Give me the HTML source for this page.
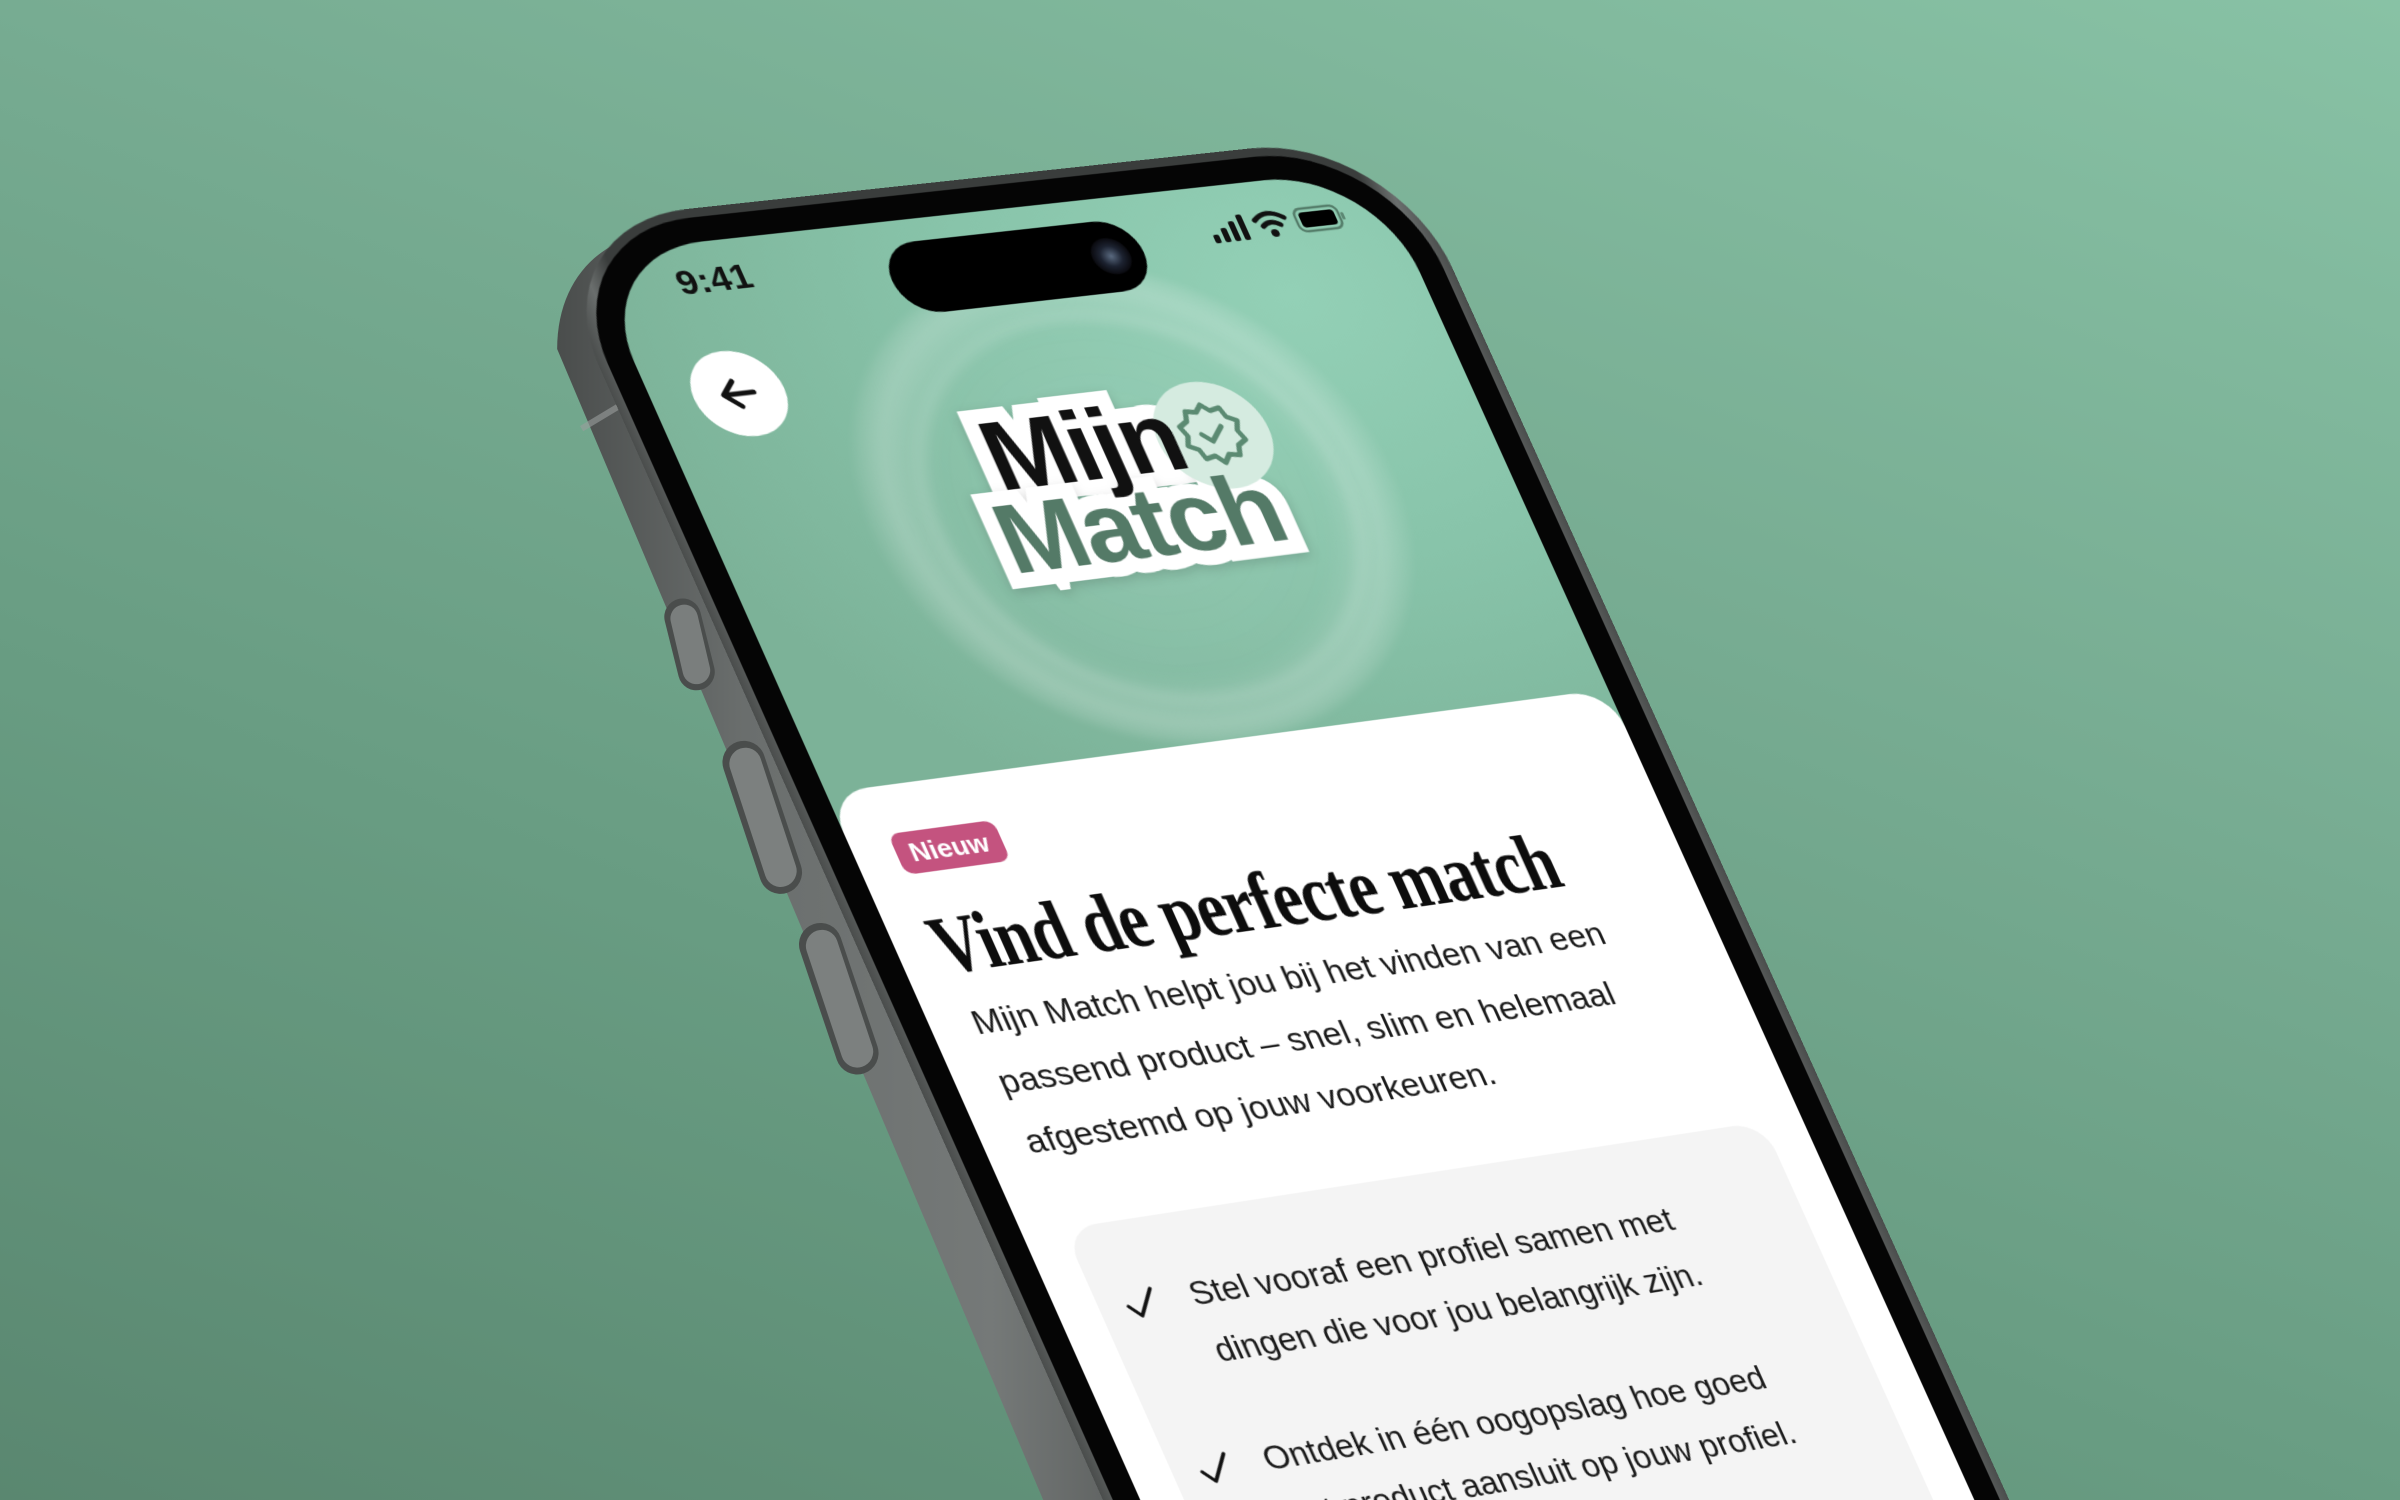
<!DOCTYPE html>
<html><head><meta charset="utf-8">
<style>
html,body{margin:0;padding:0;width:2400px;height:1500px;overflow:hidden;}
#wrap{position:relative;width:2400px;height:1500px;overflow:hidden;
background:linear-gradient(200deg,#88c2a5 0%,#78ad93 35%,#689c82 65%,#5a8770 100%);
font-family:"Liberation Sans",sans-serif;}
#side{position:absolute;left:0;top:0;}
#ph{position:absolute;left:0;top:0;width:786px;height:1704px;transform-origin:0 0;
transform:matrix3d(1.06120,-0.10165,0,0.00004391, 0.42367,0.96125,0,-0.000008095, 0,0,1,0, 586.2,254.1,0,1);}
.frame{position:absolute;left:-34px;top:-34px;width:854px;height:1772px;border-radius:146px;
background:linear-gradient(90deg,#4a4d4c,#6a6e6d 3%,#3a3d3c 6%,#3a3d3c 94%,#6a6e6d 97%,#4a4d4c);}
.bezel{position:absolute;left:-25px;top:-25px;width:836px;height:1754px;border-radius:136px;background:#050505;}
.screen{position:absolute;left:0;top:0;width:786px;height:1704px;border-radius:112px;overflow:hidden;
background:radial-gradient(ellipse 700px 600px at 650px 120px,#93d0b6 0%,#88c4aa 45%,#7cb298 100%);}
.bubble{position:absolute;border-radius:50%;}
.island{position:absolute;left:274px;top:23px;width:252px;height:74px;border-radius:37px;background:#000;}
.cam{position:absolute;right:14px;top:18px;width:38px;height:38px;border-radius:50%;background:radial-gradient(circle at 50% 50%,#5a6a80 0,#1c2230 40%,#0a0a0f 70%);}
.time{position:absolute;left:72px;top:20px;font-size:35px;font-weight:bold;color:#111;letter-spacing:0.5px;}
.back{position:absolute;left:40px;top:111px;width:88px;height:88px;border-radius:50%;background:#fff;}
.logo{position:absolute;font-weight:bold;font-size:100px;line-height:84px;letter-spacing:-2px;}
.logo.s{-webkit-text-stroke:30px #fff;color:#fff;filter:drop-shadow(0 4px 6px rgba(0,0,0,0.15));}
.card{position:absolute;left:0;top:557px;width:786px;height:1300px;background:#fff;border-radius:40px 40px 0 0;}
.badge{position:absolute;left:40px;top:48px;height:42px;line-height:42px;padding:0 13px;border-radius:10px;background:#c4537f;color:#fff;font-weight:bold;font-size:26px;}
.title{position:absolute;left:36px;top:123px;font-family:"Liberation Serif",serif;font-weight:bold;font-size:82px;line-height:82px;white-space:nowrap;color:#0d0d0d;transform:scaleX(0.785);transform-origin:0 0;letter-spacing:-1px;}
.body{position:absolute;left:41px;top:213px;font-size:33.5px;line-height:61px;color:#1a1a1a;white-space:nowrap;}
.box{position:absolute;left:40px;top:453px;width:706px;height:900px;border-radius:32px;background:#f4f4f4;}
.item{position:absolute;left:90px;font-size:32.5px;line-height:58px;color:#1a1a1a;white-space:nowrap;}
.chk{position:absolute;left:22px;}
</style></head><body><div id="wrap">
<svg id="side" width="2400" height="1500" viewBox="0 0 1568 980" preserveAspectRatio="none">
<defs><linearGradient id="sg" x1="0" y1="0" x2="1" y2="0">
<stop offset="0" stop-color="#4a4d4c"/><stop offset="0.3" stop-color="#6a6e6d"/><stop offset="0.7" stop-color="#757978"/><stop offset="1" stop-color="#555857"/></linearGradient></defs>
<path d="M410 156 C382 166 364 192 364 228 L690 1000 L770 1000 L440 190 Z" fill="url(#sg)"/>
<path d="M380 280 L410 262" stroke="#9a9e9d" stroke-width="4" opacity="0.6"/>
<g stroke-linecap="round">
<line x1="446" y1="403" x2="455" y2="439" stroke="#4a4d4c" stroke-width="24"/>
<line x1="447" y1="404" x2="455" y2="438" stroke="#7a7e7d" stroke-width="18"/>
<line x1="486" y1="498" x2="510" y2="570" stroke="#4a4d4c" stroke-width="28"/>
<line x1="487" y1="499" x2="510" y2="569" stroke="#7c807f" stroke-width="21"/>
<line x1="536" y1="617" x2="560" y2="688" stroke="#4a4d4c" stroke-width="28"/>
<line x1="537" y1="618" x2="560" y2="687" stroke="#7c807f" stroke-width="21"/>
</g>
</svg>
<div id="ph">
 <div class="frame"></div>
 <div class="bezel"></div>
 <div class="screen">
  <div class="bubble" style="left:150px;top:60px;width:520px;height:500px;background:radial-gradient(circle,rgba(255,255,255,0.08) 0%,rgba(255,255,255,0.04) 50%,rgba(255,255,255,0.22) 64%,rgba(255,255,255,0.08) 70%,rgba(255,255,255,0) 74%);filter:blur(4px);"></div>
  <div class="bubble" style="left:205px;top:110px;width:400px;height:390px;border:10px solid rgba(255,255,255,0.12);filter:blur(6px);"></div>
  <div class="island"><div class="cam"></div></div>
  <div class="time">9:41</div>
  <svg style="position:absolute;left:600px;top:28px" width="150" height="40" viewBox="0 0 150 40">
   <g fill="#111"><rect x="0" y="22" width="6" height="9" rx="2"/><rect x="10" y="16" width="6" height="15" rx="2"/><rect x="20" y="10" width="6" height="21" rx="2"/><rect x="30" y="4" width="6" height="27" rx="2"/></g>
   <g fill="none" stroke="#111" stroke-width="5" stroke-linecap="round"><path d="M47 12 Q62 0 77 12"/><path d="M53 19 Q62 12 71 19"/></g>
   <circle cx="62" cy="27" r="4" fill="#111"/>
   <rect x="88" y="5" width="44" height="24" rx="7" fill="none" stroke="#3a5a4a" stroke-width="2.5" opacity="0.7"/>
   <rect x="92" y="9" width="36" height="16" rx="4" fill="#000"/>
   <rect x="134" y="13" width="3" height="8" rx="1.5" fill="#3a5a4a" opacity="0.6"/>
  </svg>
  <div class="back"><svg width="88" height="88" viewBox="0 0 88 88"><path d="M58 44 H30 M42 31 L29 44 L42 57" fill="none" stroke="#111" stroke-width="5" stroke-linecap="round" stroke-linejoin="round"/></svg></div>
  <div class="logo s" style="left:288px;top:206px">Mijn</div>
  <div class="logo s" style="left:266px;top:290px">Match</div>
  <div style="position:absolute;left:458px;top:196px;width:112px;height:112px;border-radius:50%;background:#d5ebe0;"></div>
  <svg style="position:absolute;left:470px;top:208px" width="88" height="88" viewBox="0 0 88 88">
   <path d="M44 12 L51 19 L61 17 L64 27 L73 32 L69 42 L73 52 L64 57 L61 67 L51 65 L44 73 L37 65 L27 67 L24 57 L15 52 L19 42 L15 32 L24 27 L27 17 L37 19 Z" fill="none" stroke="#5b8a72" stroke-width="5" stroke-linejoin="round"/>
   <path d="M33 42 L41 50 L55 36" fill="none" stroke="#5b8a72" stroke-width="5" stroke-linecap="round" stroke-linejoin="round"/>
  </svg>
  <div class="logo" style="left:288px;top:206px;color:#111">Mijn</div>
  <div class="logo" style="left:266px;top:290px;color:#547a67">Match</div>
  <div class="card">
   <div class="badge">Nieuw</div>
   <div class="title">Vind de perfecte match</div>
   <div class="body">Mijn Match helpt jou bij het vinden van een<br>passend product – snel, slim en helemaal<br>afgestemd op jouw voorkeuren.</div>
   <div class="box">
    <div class="item" style="top:53px">Stel vooraf een profiel samen met<br>dingen die voor jou belangrijk zijn.</div>
    <svg class="chk" style="top:64px;left:22px" width="40" height="40" viewBox="0 0 40 40"><path d="M6 20 L15 31 L33 6" fill="none" stroke="#111" stroke-width="3.5" stroke-linecap="round" stroke-linejoin="round"/></svg>
    <div class="item" style="top:222px">Ontdek in één oogopslag hoe goed<br>het product aansluit op jouw profiel.</div>
    <svg class="chk" style="top:233px;left:22px" width="40" height="40" viewBox="0 0 40 40"><path d="M6 20 L15 31 L33 6" fill="none" stroke="#111" stroke-width="3.5" stroke-linecap="round" stroke-linejoin="round"/></svg>
   </div>
  </div>
 </div>
</div>
</div></body></html>
